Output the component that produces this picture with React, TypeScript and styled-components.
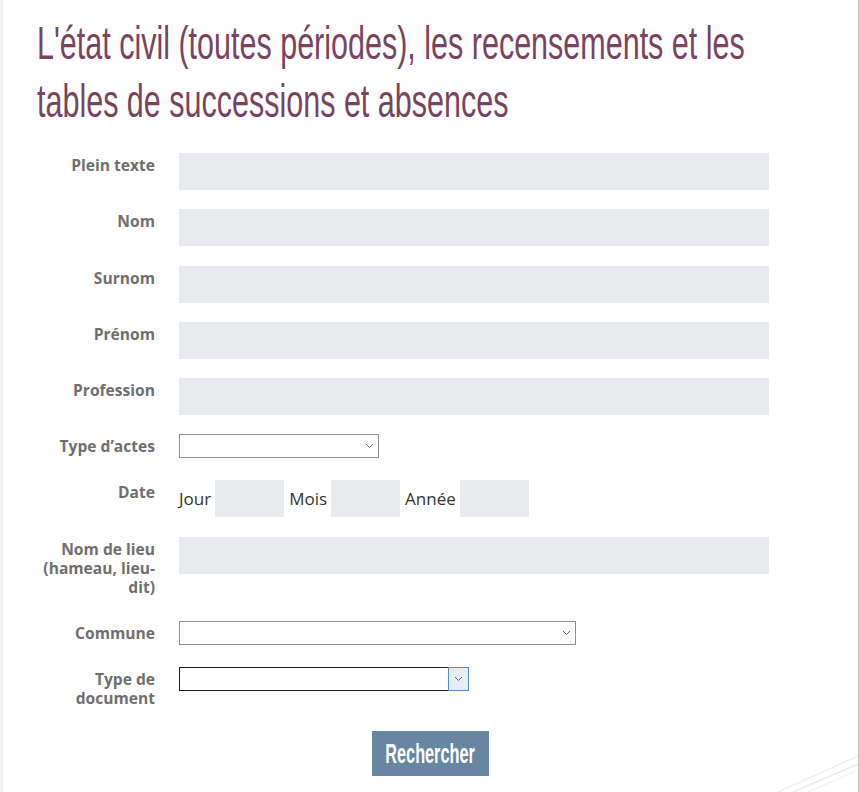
import React from "react";
import styled, { createGlobalStyle } from "styled-components";

const Global = createGlobalStyle`
  html, body { margin: 0; padding: 0; background: #fff; }
  body { font-family: "Open Sans", "Liberation Sans", sans-serif; }
  * { box-sizing: border-box; }
`;

const Page = styled.div`
  position: relative;
  width: 859px;
  min-height: 792px;
  border-left: 3px solid #f1f1f1;
  border-right: 1px solid #c9c9c9;
  background: #fff;
  overflow: hidden;
`;

const TitleWrap = styled.div`
  padding: 14px 0 0 34px;
`;

const Title = styled.h1`
  margin: 0;
  width: 1200px;
  transform: scaleX(0.656);
  transform-origin: left top;
  font-family: "Liberation Sans", "Arial", sans-serif;
  font-weight: 400;
  font-size: 46.5px;
  line-height: 58px;
  color: #7a4461;
  white-space: nowrap;
`;

const TitleLine = styled.span`
  display: block;
`;

const Form = styled.form`
  display: flex;
  flex-direction: column;
  gap: 19.3px;
  margin-top: 23px;
`;

const Row = styled.div`
  display: grid;
  grid-template-columns: 152px 1fr;
  column-gap: 24px;
  align-items: start;
`;

const Label = styled.label`
  padding: 3px 0 4.7px;
  text-align: right;
  font-family: "Open Sans", sans-serif;
  font-weight: 700;
  font-size: 15.6px;
  line-height: 19px;
  color: #6f6f6f;
`;

const TextInput = styled.div`
  width: 590px;
  height: 37px;
  background: #e8ebee;
`;

const SelectBox = styled.div<{ $w: number; $focus?: boolean }>`
  width: ${(p) => p.$w}px;
  height: 24px;
  border: 1px solid ${(p) => (p.$focus ? "#1a1a1a" : "#8f8f8f")};
  background: #fff;
  display: flex;
  justify-content: flex-end;
  align-items: stretch;
`;

const Chevron = styled.span<{ $focus?: boolean }>`
  width: ${(p) => (p.$focus ? "21px" : "18px")};
  display: flex;
  align-items: center;
  justify-content: center;
  background: ${(p) => (p.$focus ? "#e3eef9" : "transparent")};
  border: ${(p) => (p.$focus ? "1px solid #4f8ec2" : "none")};
  margin: ${(p) => (p.$focus ? "-1px -1px -1px 0" : "0")};
`;

const DateGroup = styled.div`
  display: flex;
  align-items: center;
  font-family: "Open Sans", sans-serif;
  font-size: 17px;
  color: #333;
`;

const DateLabel = styled.span`
  margin-right: 4px;
`;

const DateInput = styled.div`
  width: 69px;
  height: 37px;
  background: #e8ebee;
  margin-right: 5px;
`;

const Actions = styled.div`
  display: flex;
  justify-content: center;
  margin-top: -1px;
`;

const Button = styled.button`
  width: 117px;
  height: 45px;
  border: none;
  background: #6686a2;
  padding: 0;
  display: flex;
  align-items: center;
  justify-content: center;
  cursor: pointer;
  overflow: hidden;
`;

const ButtonText = styled.span`
  display: inline-block;
  color: #fff;
  font-family: "Liberation Sans", "Arial", sans-serif;
  font-weight: 700;
  font-size: 28px;
  line-height: 1;
  transform: scaleX(0.58);
  white-space: nowrap;
  margin-top: 2px;
`;

const Deco = styled.svg`
  position: absolute;
  right: 0;
  bottom: 0;
  pointer-events: none;
`;

const ChevronIcon = () => (
  <svg width="9" height="6" viewBox="0 0 9 6">
    <path d="M1 1 L4.5 4.5 L8 1" fill="none" stroke="#666" strokeWidth="1" />
  </svg>
);

export default function App() {
  return (
    <Page>
      <Global />
      <TitleWrap>
        <Title>
          <TitleLine>L'état civil (toutes périodes), les recensements et les</TitleLine>
          <TitleLine>tables de successions et absences</TitleLine>
        </Title>
      </TitleWrap>
      <Form>
        <Row>
          <Label>Plein texte</Label>
          <TextInput />
        </Row>
        <Row>
          <Label>Nom</Label>
          <TextInput />
        </Row>
        <Row>
          <Label>Surnom</Label>
          <TextInput />
        </Row>
        <Row>
          <Label>Prénom</Label>
          <TextInput />
        </Row>
        <Row>
          <Label>Profession</Label>
          <TextInput />
        </Row>
        <Row>
          <Label>Type d’actes</Label>
          <SelectBox $w={200}>
            <Chevron>
              <ChevronIcon />
            </Chevron>
          </SelectBox>
        </Row>
        <Row>
          <Label>Date</Label>
          <DateGroup>
            <DateLabel>Jour</DateLabel>
            <DateInput />
            <DateLabel>Mois</DateLabel>
            <DateInput />
            <DateLabel>Année</DateLabel>
            <DateInput />
          </DateGroup>
        </Row>
        <Row>
          <Label>
            Nom de lieu
            <br />
            (hameau, lieu-
            <br />
            dit)
          </Label>
          <TextInput />
        </Row>
        <Row>
          <Label>Commune</Label>
          <SelectBox $w={397}>
            <Chevron>
              <ChevronIcon />
            </Chevron>
          </SelectBox>
        </Row>
        <Row>
          <Label>
            Type de
            <br />
            document
          </Label>
          <SelectBox $w={290} $focus>
            <Chevron $focus>
              <ChevronIcon />
            </Chevron>
          </SelectBox>
        </Row>
        <Actions>
          <Button type="button">
            <ButtonText>Rechercher</ButtonText>
          </Button>
        </Actions>
      </Form>
      <Deco width="110" height="50" viewBox="0 0 110 50">
        <path d="M30 50 L110 14" stroke="#ececec" strokeWidth="1.2" fill="none" />
        <path d="M45 50 L110 22" stroke="#e6e6e6" strokeWidth="1.2" fill="none" />
        <path d="M60 50 L110 28" stroke="#eeeeee" strokeWidth="1" fill="none" />
      </Deco>
    </Page>
  );
}
